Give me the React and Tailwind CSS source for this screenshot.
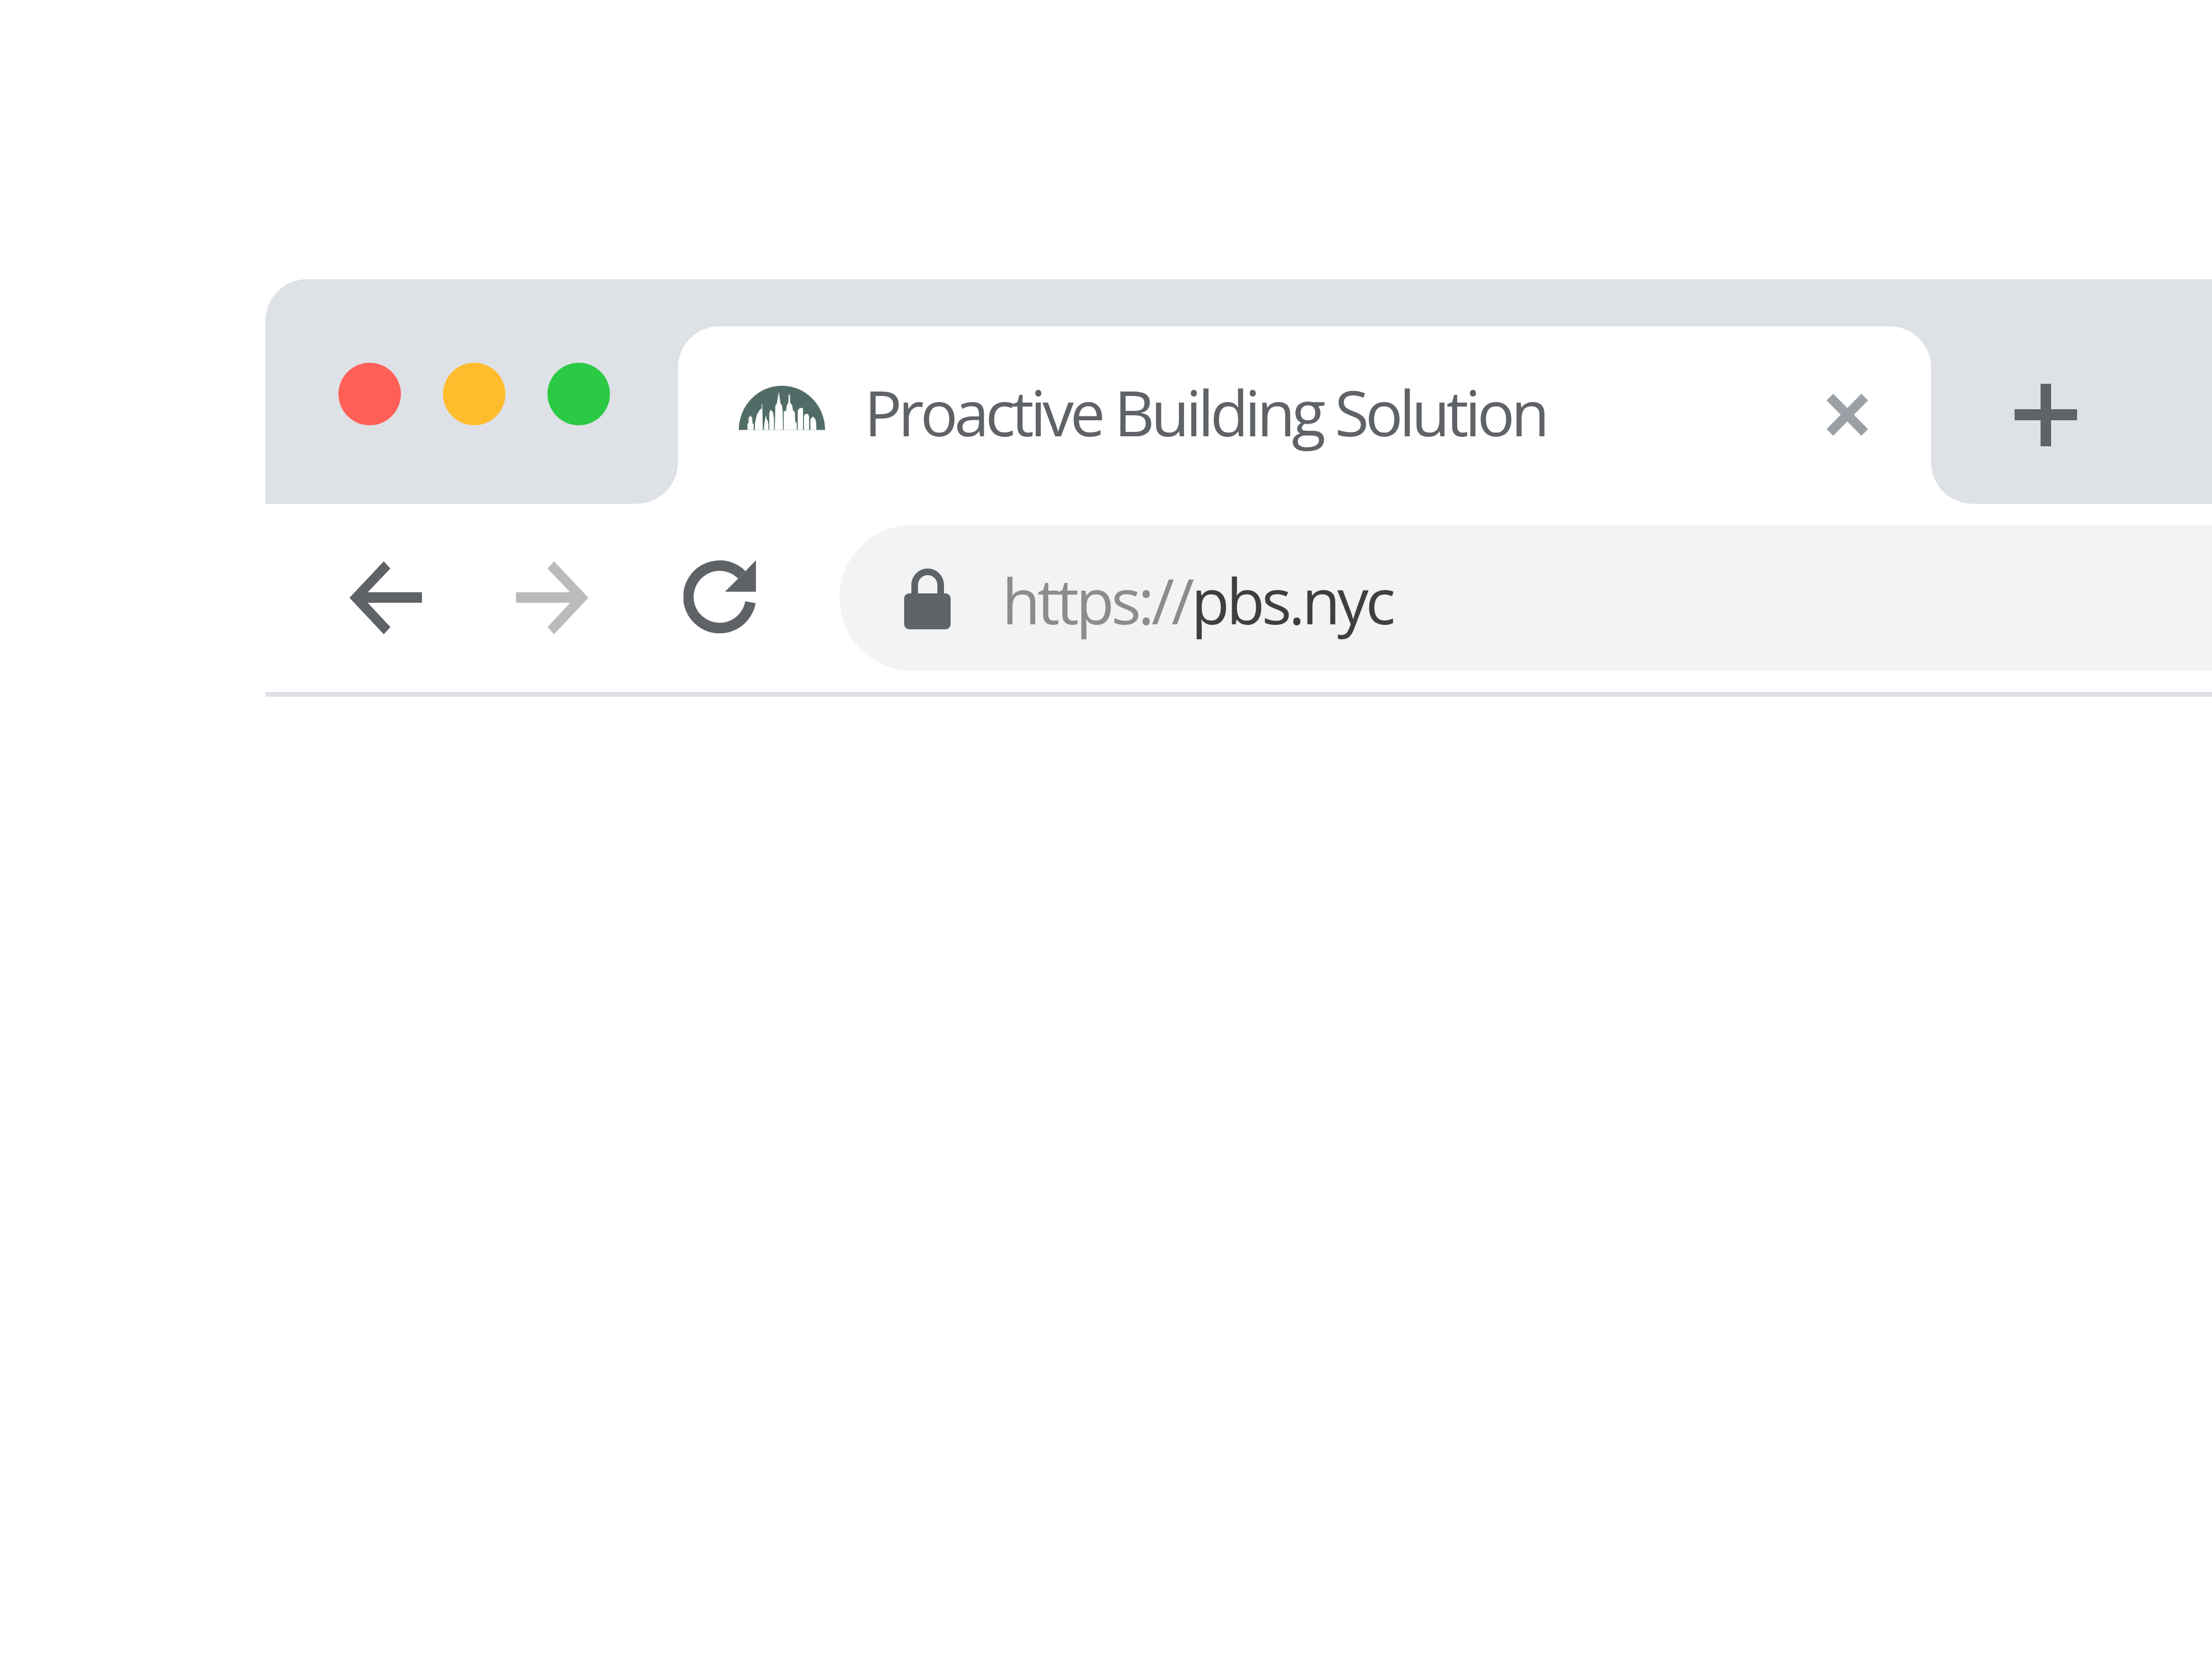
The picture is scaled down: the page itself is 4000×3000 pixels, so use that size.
import React from "react";

const buildings = [
  "184,323 184,288 190,285 190,258 200,245 210,258 212,288 218,290 218,323",
  "224,323 226,280 235,240 250,215 262,205 262,183 265,183 266,235 268,323",
  "274,323 276,290 280,265 285,243 289,265 295,275 298,290 299,323",
  "303,323 303,230 310,213 323,225 328,260 329,323",
  "333,323 336,190 344,180 355,115 364,178 372,190 376,215 378,323",
  "382,323 382,222 395,218 398,190 407,175 409,130 415,130 417,175 428,190 432,215 442,225 445,280 452,282 453,323",
  "458,323 458,213 466,213 466,203 487,203 487,323",
  "492,323 492,250 497,237 513,235 520,250 520,323",
  "527,323 527,265 540,250 553,262 558,280 560,323",
];

const SkylineLogo = () => (
  <svg width="156" height="81" viewBox="137 82 470 241" className="shrink-0">
    <path d="M137 323A235 241 0 0 1 607 323Z" fill="#516c66" />
    {buildings.map((points) => (
      <polygon key={points} points={points} fill="#ffffff" />
    ))}
  </svg>
);

const ArrowIcon = ({ color, flip }) => (
  <svg width="131" height="132" viewBox="0 0 131 132" className={flip ? "shrink-0 -scale-x-100" : "shrink-0"}>
    <polygon points="0,66 62,0 74,13 33,56 131,56 131,75 33,75 74,119 62,132" fill={color} />
  </svg>
);

const ReloadIcon = () => (
  <svg width="132" height="133" viewBox="0 0 132 133" className="shrink-0">
    <path d="M121 76A56.5 56.5 0 1 1 105.5 26.6" fill="none" stroke="#5f6368" strokeWidth="19" />
    <polygon points="131,0 131,57 75,57 99,33 112,20" fill="#5f6368" />
  </svg>
);

const LockIcon = () => (
  <svg width="84" height="110" viewBox="0 0 84 110" className="shrink-0">
    <path d="M19 50V29.5A23.5 23.5 0 0 1 66 29.5V50" fill="none" stroke="#5f6368" strokeWidth="12" />
    <rect x="0" y="45" width="84" height="65" rx="9" fill="#5f6368" />
  </svg>
);

const CloseIcon = () => (
  <svg width="75" height="76" viewBox="0 0 75 76" className="shrink-0">
    <path d="M6 6L69 70M69 6L6 70" fill="none" stroke="#9aa0a6" strokeWidth="17" />
  </svg>
);

const PlusIcon = () => (
  <svg width="113" height="113" viewBox="0 0 113 113" className="shrink-0">
    <path d="M47 0h19v46h47v20H66v47H47V66H0V46h47Z" fill="#5f6368" />
  </svg>
);

const App = () => {
  return (
    <div className="w-[4000px] h-[3000px] overflow-hidden bg-white pt-[505px] pl-[480px] font-['Open_Sans',sans-serif]">
      {/* tab strip */}
      <div className="h-[85px] rounded-tl-[75px] bg-[#dee1e6]" />
      <div className="flex h-[321px] bg-[linear-gradient(#dee1e6_50%,#ffffff_50%)]">
        <div className="flex w-[746px] gap-[76px] rounded-br-[75px] bg-[#dee1e6] pt-[66px] pl-[132px]">
          <div className="h-[113px] w-[113px] rounded-full bg-[#ff5f57]" />
          <div className="h-[113px] w-[113px] rounded-full bg-[#ffbd2e]" />
          <div className="h-[113px] w-[113px] rounded-full bg-[#2aca44]" />
        </div>
        <div className="flex w-[2266px] items-start rounded-t-[75px] bg-white">
          <div className="ml-[110px] mt-[107px]">
            <SkylineLogo />
          </div>
          <span className="ml-[71px] mt-[78px] w-[1740px] text-[113px] leading-[154px] font-normal tracking-[-6.5px] whitespace-nowrap text-[#5f6368]">
            Proactive Building Solution
          </span>
          <div className="mt-[122px]">
            <CloseIcon />
          </div>
        </div>
        <div className="flex flex-1 rounded-bl-[75px] bg-[#dee1e6] pt-[104px] pl-[151px]">
          <PlusIcon />
        </div>
      </div>

      {/* toolbar */}
      <div className="flex h-[349px] items-start border-b-[9px] border-[#dee1e6] bg-white pt-[38px]">
        <div className="ml-[152px] mt-[66px]">
          <ArrowIcon color="#5f6368" />
        </div>
        <div className="ml-[170px] mt-[66px]">
          <ArrowIcon color="#babbbd" flip />
        </div>
        <div className="ml-[172px] mt-[64px]">
          <ReloadIcon />
        </div>
        <div className="ml-[150px] flex h-[264px] flex-1 items-start rounded-l-full bg-[#f2f3f5]">
          <div className="ml-[117px] mt-[79px]">
            <LockIcon />
          </div>
          <span className="ml-[93px] mt-[59px] text-[113px] leading-[154px] font-normal tracking-[-5.4px] whitespace-nowrap text-[#8a8c8e]">
            https://<span className="text-[#3e3f41]">pbs.nyc</span>
          </span>
        </div>
      </div>
    </div>
  );
};

export default App;
